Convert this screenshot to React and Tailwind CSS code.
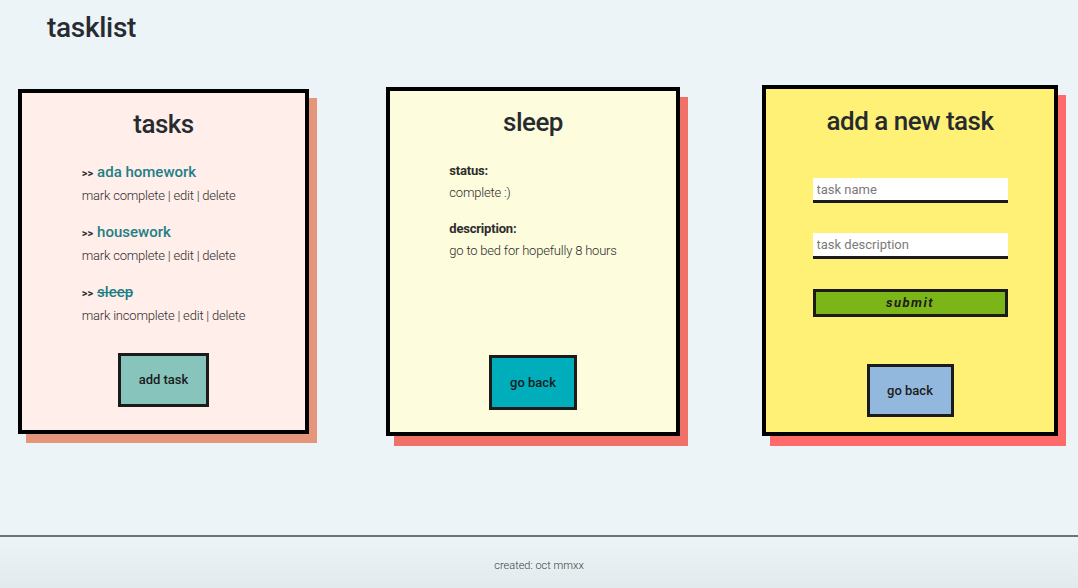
import React from 'react';

// ─── Task data ────────────────────────────────────────────────────────────────
const TASKS = [
  { name: 'ada homework', done: false },
  { name: 'housework', done: false },
  { name: 'sleep', done: true },
];

function TaskItem({ task }) {
  return (
    <li className="mb-[14px]">
      <div className="flex items-baseline gap-[4px] leading-[22px]">
        <span className="text-[11px] font-bold text-[#2a2d31]">&gt;&gt;</span>
        <a
          href="#"
          className={`text-[15px] font-medium text-[#1d7f86] ${task.done ? 'line-through' : ''}`}
        >
          {task.name}
        </a>
      </div>
      <p className="text-[13px] font-light tracking-[-0.2px] text-[#2d2d2d] leading-[22px]">
        {task.done ? 'mark incomplete' : 'mark complete'} | edit | delete
      </p>
    </li>
  );
}

// ─── Card 1: task list ────────────────────────────────────────────────────────
function TasksCard() {
  return (
    <section className="mt-[29px] w-[291px] h-[345px] border-[4px] border-black bg-[#ffeee9] shadow-[8px_9px_0_#e5967a] flex flex-col items-center">
      <h2 className="mt-[13px] text-[26px] font-medium tracking-[-0.5px] text-[#272b30] leading-[36px]">tasks</h2>
      <ul className="mt-[19px] w-fit">
        {TASKS.map((t) => (
          <TaskItem key={t.name} task={t} />
        ))}
      </ul>
      <button className="mt-[12px] w-[91px] h-[54px] border-[3px] border-[#1b1b1b] bg-[#86c4bc] text-[13px] font-medium text-[#1b1b1b]">
        add task
      </button>
    </section>
  );
}

// ─── Card 2: task detail ──────────────────────────────────────────────────────
function DetailCard() {
  return (
    <section className="ml-[77px] mt-[27px] w-[294px] h-[349px] border-[4px] border-black bg-[#fdfcdd] shadow-[8px_10px_0_#f07167] flex flex-col items-center">
      <h2 className="mt-[13px] text-[26px] font-medium tracking-[-0.5px] text-[#272b30] leading-[36px]">sleep</h2>
      <div className="mt-[20px] w-fit text-[13px] tracking-[-0.2px] text-[#2d2d2d]">
        <p className="font-bold leading-[22px]">status:</p>
        <p className="font-light leading-[22px]">complete :)</p>
        <p className="mt-[14px] font-bold leading-[22px]">description:</p>
        <p className="font-light leading-[21px]">go to bed for hopefully 8 hours</p>
      </div>
      <button className="mt-auto mb-[22px] w-[88px] h-[55px] border-[3px] border-[#1b1b1b] bg-[#00adbb] text-[13px] font-medium text-[#1b1b1b]">
        go back
      </button>
    </section>
  );
}

// ─── Card 3: new task form ────────────────────────────────────────────────────
function NewTaskCard() {
  return (
    <section className="ml-[82px] mt-[25px] w-[296px] h-[351px] border-[4px] border-black bg-[#fff176] shadow-[8px_10px_0_#ff6b6b] flex flex-col items-center">
      <h2 className="mt-[14px] text-[26px] font-medium tracking-[-0.5px] text-[#272b30] leading-[36px]">add a new task</h2>
      <form className="mt-[39px] w-[195px] flex flex-col">
        <input
          placeholder="task name"
          className="h-[25px] bg-white border-b-[3px] border-[#1b1b1b] px-[4px] text-[13px] placeholder:text-[#7a7a7a] outline-none"
        />
        <input
          placeholder="task description"
          className="mt-[30px] h-[26px] bg-white border-b-[3px] border-[#1b1b1b] px-[4px] text-[13px] placeholder:text-[#7a7a7a] outline-none"
        />
        <button
          type="button"
          className="mt-[30px] h-[28px] border-[3px] border-[#1b1b1b] bg-[#7cb518] text-[13px] font-bold italic tracking-[1.5px] text-[#1b1b1b]"
        >
          submit
        </button>
      </form>
      <button className="mt-[47px] w-[87px] h-[53px] border-[3px] border-[#1b1b1b] bg-[#93b8dd] text-[13px] font-medium text-[#1b1b1b]">
        go back
      </button>
    </section>
  );
}

export default function App() {
  return (
    <div className="h-[588px] bg-[#ecf4f7] flex flex-col font-['Roboto',sans-serif] overflow-hidden">
      <header className="h-[60px] pl-[47px] pt-[10px]">
        <h1 className="text-[28px] font-medium tracking-[-0.3px] text-[#272b30] leading-[36px]">tasklist</h1>
      </header>

      <main className="flex-1 flex items-start pl-[18px]">
        <TasksCard />
        <DetailCard />
        <NewTaskCard />
      </main>

      <footer className="h-[53px] border-t-[2px] border-[#6d7275] bg-gradient-to-b from-[#ecf4f7] to-[#e2eaed] flex justify-center pt-[21px]">
        <p className="text-[11px] leading-[16px] text-[#3a3a3a] font-light">created: oct mmxx</p>
      </footer>
    </div>
  );
}
